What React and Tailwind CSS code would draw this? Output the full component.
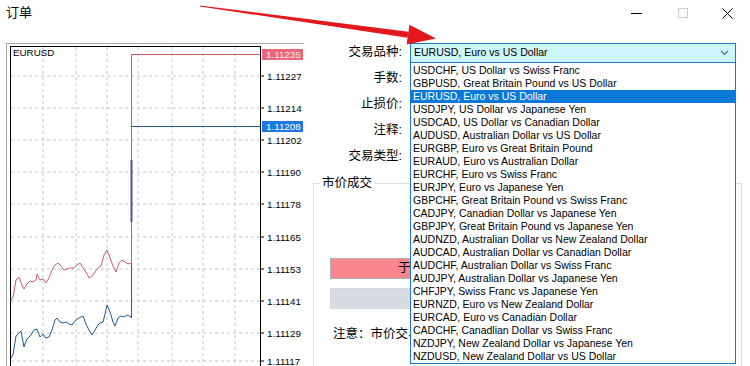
import React from 'react';

const symbols = [
  'USDCHF, US Dollar vs Swiss Franc',
  'GBPUSD, Great Britain Pound vs US Dollar',
  'EURUSD, Euro vs US Dollar',
  'USDJPY, US Dollar vs Japanese Yen',
  'USDCAD, US Dollar vs Canadian Dollar',
  'AUDUSD, Australian Dollar vs US Dollar',
  'EURGBP, Euro vs Great Britain Pound',
  'EURAUD, Euro vs Australian Dollar',
  'EURCHF, Euro vs Swiss Franc',
  'EURJPY, Euro vs Japanese Yen',
  'GBPCHF, Great Britain Pound vs Swiss Franc',
  'CADJPY, Canadian Dollar vs Japanese Yen',
  'GBPJPY, Great Britain Pound vs Japanese Yen',
  'AUDNZD, Australian Dollar vs New Zealand Dollar',
  'AUDCAD, Australian Dollar vs Canadian Dollar',
  'AUDCHF, Australian Dollar vs Swiss Franc',
  'AUDJPY, Australian Dollar vs Japanese Yen',
  'CHFJPY, Swiss Franc vs Japanese Yen',
  'EURNZD, Euro vs New Zealand Dollar',
  'EURCAD, Euro vs Canadian Dollar',
  'CADCHF, Canadlian Dollar vs Swiss Franc',
  'NZDJPY, New Zealand Dollar vs Japanese Yen',
  'NZDUSD, New Zealand Dollar vs US Dollar',
];

// price scale, y = text centre
const prices = [
  ['1.11227', 76],
  ['1.11214', 108],
  ['1.11202', 140],
  ['1.11190', 172],
  ['1.11178', 204],
  ['1.11165', 237],
  ['1.11153', 269],
  ['1.11141', 301],
  ['1.11129', 333],
  ['1.11117', 361],
];

const gridX = [43, 76, 107, 138, 172, 203, 235];

const askLine = [
  [11, 300], [13, 297], [16, 280], [19, 277], [22, 285], [24, 289], [27, 284], [30, 281],
  [33, 282], [36, 280], [37, 274], [40, 280], [43, 279], [46, 283], [49, 278], [52, 270],
  [55, 265], [58, 263], [61, 266], [64, 270], [67, 269], [70, 268], [74, 268], [77, 265],
  [80, 263], [83, 268], [86, 272], [89, 278], [92, 276], [95, 272], [98, 268], [101, 266],
  [104, 255], [107, 250], [110, 258], [113, 266], [116, 272], [119, 263], [122, 260],
  [125, 262], [128, 264], [131, 263],
];

const bidLine = [
  [11, 358], [13, 355], [16, 336], [19, 333], [21, 331], [24, 347], [26, 341], [28, 338],
  [31, 335], [34, 330], [37, 329], [40, 337], [43, 334], [46, 338], [49, 337], [52, 330],
  [55, 320], [57, 318], [60, 322], [63, 323], [66, 322], [69, 324], [72, 325], [75, 321],
  [79, 318], [83, 316], [86, 324], [89, 330], [92, 335], [95, 330], [98, 325], [100, 323],
  [103, 322], [105, 314], [107, 305], [110, 312], [113, 322], [115, 326], [118, 318],
  [121, 316], [124, 317], [127, 315], [131, 317],
];

const pts = (arr) => arr.map(([x, y]) => `${x},${y}`).join(' ');

function Chart() {
  return (
    <svg width="297" height="322" viewBox="7 44 297 322" className="block">
      <rect x="10.5" y="46.5" width="250" height="320" fill="white" stroke="#000" />
      {prices.map(([p, y]) => (
        <g key={p}>
          <line x1="11" x2="260" y1={y} y2={y} stroke="#c4c4c4" strokeDasharray="3 3" />
          <line x1="260" x2="264" y1={y} y2={y} stroke="#000" />
          <text x="267" y={y + 3.5} fontSize="9.8" fontFamily="Liberation Sans" fill="#000">{p}</text>
        </g>
      ))}
      {gridX.map((x) => (
        <line key={x} x1={x} x2={x} y1="47" y2="366" stroke="#c4c4c4" strokeDasharray="3 3" />
      ))}
      <text x="13" y="56" fontSize="9.8" fontFamily="Liberation Sans" fill="#000">EURUSD</text>

      <polyline points={pts(askLine)} fill="none" stroke="#d35a6c" strokeWidth="1" />
      <polyline points={pts(bidLine)} fill="none" stroke="#1e5a96" strokeWidth="1" />

      <line x1="131.5" x2="131.5" y1="54" y2="264" stroke="#d35a6c" />
      <line x1="131.5" x2="131.5" y1="264" y2="318" stroke="#1e5a96" />
      <line x1="131.5" x2="131.5" y1="160" y2="222" stroke="#5b4ba0" strokeWidth="2" />
      <line x1="131" x2="260" y1="54.5" y2="54.5" stroke="#d35a6c" />
      <line x1="131" x2="260" y1="126.5" y2="126.5" stroke="#1e5a96" />

      <rect x="262" y="49" width="41" height="11" fill="#e8687a" />
      <text x="266" y="58" fontSize="9.8" fontFamily="Liberation Sans" fill="#ffe8ec">1.11235</text>
      <rect x="262" y="121" width="41" height="11" fill="#1c78de" />
      <text x="266" y="130" fontSize="9.8" fontFamily="Liberation Sans" fill="#fff">1.11208</text>
    </svg>
  );
}

function SymbolDropdown() {
  return (
    <div className="absolute left-[410px] top-[43px] w-[326px] font-['Liberation_Sans',sans-serif] text-[10.5px] text-black">
      <div className="flex h-[20px] items-center border border-[#1979c3] bg-[#ccf6fb] pl-[3px] pr-[6px]">
        <span>EURUSD, Euro vs US Dollar</span>
        <svg className="ml-auto" width="9" height="6" viewBox="0 0 9 6">
          <polyline points="1,1 4.5,4.5 8,1" fill="none" stroke="#5a6a7a" strokeWidth="1.2" />
        </svg>
      </div>
      <div className="border-x border-b border-[#1979c3] bg-white pt-px pb-0">
        {symbols.map((s) => (
          <div
            key={s}
            className={
              s.startsWith('EURUSD')
                ? 'h-[13px] pl-[2px] leading-[13px] whitespace-nowrap bg-[#0a78d7] text-white'
                : 'h-[13px] pl-[2px] leading-[13px] whitespace-nowrap'
            }
          >
            {s}
          </div>
        ))}
      </div>
    </div>
  );
}

export default function App() {
  return (
    <div className="relative h-[366px] w-[750px] overflow-hidden bg-white font-['Liberation_Sans','Noto_Sans_CJK_SC',sans-serif] text-black">
      {/* title bar */}
      <div className="flex h-[26px] items-center">
        <span className="ml-[6px] text-[13px]">订单</span>
        <div className="ml-auto flex items-center">
          <span className="mr-[36px] block h-px w-[11px] bg-black" />
          <span className="mr-[34px] block h-[10px] w-[10px] border border-[#cfcfcf]" />
          <svg className="mr-[17px]" width="11" height="11" viewBox="0 0 11 11">
            <path d="M0.5 0.5 L10.5 10.5 M10.5 0.5 L0.5 10.5" stroke="#000" strokeWidth="1" />
          </svg>
        </div>
      </div>

      <div className="flex pt-[17px]">
        {/* chart */}
        <div className="ml-[6px] h-[323px] w-[298px] border-l border-t border-[#a6a6a6]">
          <Chart />
        </div>

        {/* order form */}
        <div className="-mt-[4px] flex flex-1 flex-col">
          <div className="flex w-[98px] flex-col text-right text-[12.5px]">
            <div className="h-[26px] leading-[26px]">交易品种:</div>
            <div className="h-[26px] leading-[26px]">手数:</div>
            <div className="h-[26px] leading-[26px]">止损价:</div>
            <div className="h-[26px] leading-[26px]">注释:</div>
            <div className="h-[26px] leading-[26px]">交易类型:</div>
          </div>

          <fieldset className="ml-[9px] mt-[5px] h-[220px] w-[429px] border border-[#dedede]">
            <legend className="ml-[6px] px-[2px] text-[12.5px]">市价成交</legend>
            <div className="ml-[16px] mt-[65px] flex h-[21px] w-[395px] items-center border border-[#b2b2b2] bg-[#f9858f] text-[12.5px]">
              {/* the rest of the caption sits under the open list */}
              <span className="ml-[67px] block w-[12px] overflow-hidden whitespace-nowrap">于</span>
            </div>
            <div className="ml-[16px] mt-[9px] h-[21px] w-[395px] border border-[#d0d6db] bg-[#d6dce2]" />
            <div className="ml-[19px] mt-[16px] w-[77px] overflow-hidden whitespace-nowrap text-[12.5px]">注意：市价交易</div>
          </fieldset>
        </div>
      </div>

      <SymbolDropdown />

      {/* red annotation arrow */}
      <svg className="pointer-events-none absolute left-0 top-0" width="750" height="60" viewBox="0 0 750 60">
        <polygon points="200,5.5 200,6.5 407.6,37.7 408.4,31.7" fill="#e3181d" />
        <polygon points="409.4,24.8 406.6,44.6 436,38.6" fill="#e3181d" />
      </svg>
    </div>
  );
}
